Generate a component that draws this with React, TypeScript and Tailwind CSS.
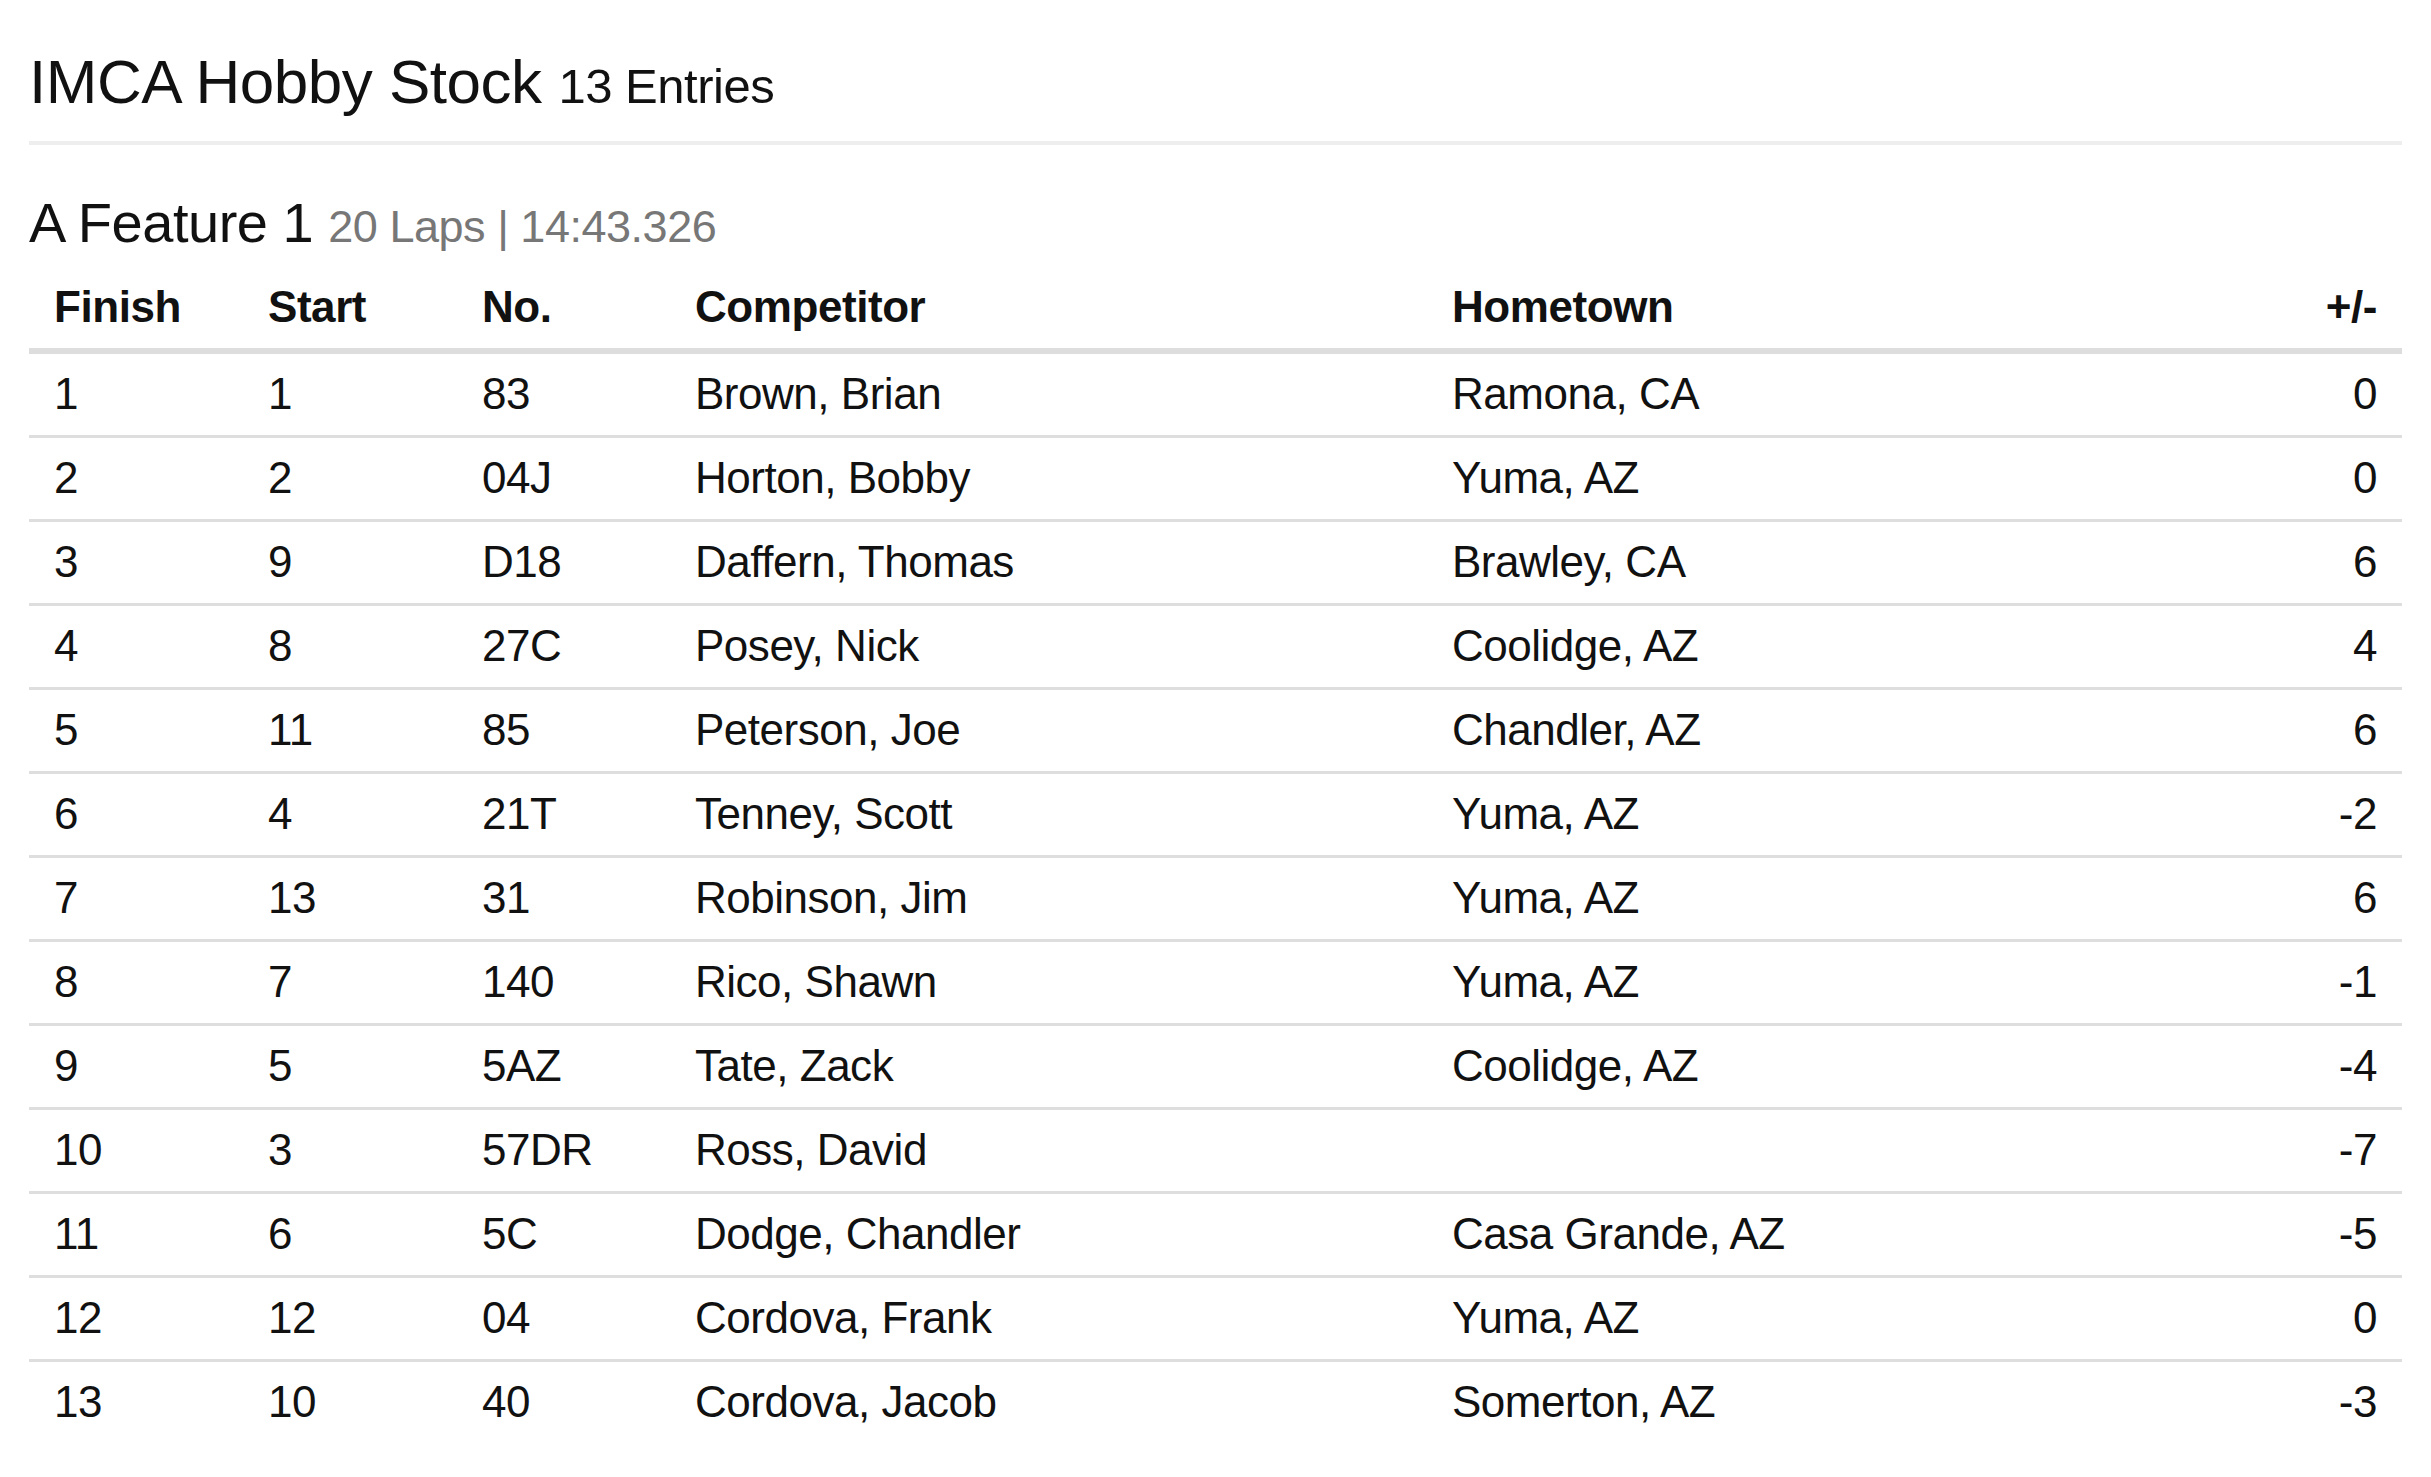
const rows = [
  { finish: 1, start: 1, no: "83", name: "Brown, Brian", town: "Ramona, CA", diff: "0" },
  { finish: 2, start: 2, no: "04J", name: "Horton, Bobby", town: "Yuma, AZ", diff: "0" },
  { finish: 3, start: 9, no: "D18", name: "Daffern, Thomas", town: "Brawley, CA", diff: "6" },
  { finish: 4, start: 8, no: "27C", name: "Posey, Nick", town: "Coolidge, AZ", diff: "4" },
  { finish: 5, start: 11, no: "85", name: "Peterson, Joe", town: "Chandler, AZ", diff: "6" },
  { finish: 6, start: 4, no: "21T", name: "Tenney, Scott", town: "Yuma, AZ", diff: "-2" },
  { finish: 7, start: 13, no: "31", name: "Robinson, Jim", town: "Yuma, AZ", diff: "6" },
  { finish: 8, start: 7, no: "140", name: "Rico, Shawn", town: "Yuma, AZ", diff: "-1" },
  { finish: 9, start: 5, no: "5AZ", name: "Tate, Zack", town: "Coolidge, AZ", diff: "-4" },
  { finish: 10, start: 3, no: "57DR", name: "Ross, David", town: "", diff: "-7" },
  { finish: 11, start: 6, no: "5C", name: "Dodge, Chandler", town: "Casa Grande, AZ", diff: "-5" },
  { finish: 12, start: 12, no: "04", name: "Cordova, Frank", town: "Yuma, AZ", diff: "0" },
  { finish: 13, start: 10, no: "40", name: "Cordova, Jacob", town: "Somerton, AZ", diff: "-3" },
];

const headers = ["Finish", "Start", "No.", "Competitor", "Hometown", "+/-"];

export default function App() {
  return (
    <div className="min-h-screen bg-white px-[29px] pt-[50px] text-[#111] font-['Liberation_Sans',Arial,sans-serif] tracking-[-0.03em]">
      <h1 className="text-[62px] leading-none font-normal pt-[1px] pb-[28px] border-b-[4px] border-[#eeeeee]">
        IMCA Hobby Stock <span className="text-[49px]">13 Entries</span>
      </h1>

      <h2 className="mt-[50px] text-[56px] leading-none font-normal">
        A Feature 1 <span className="text-[45px] text-[#777]">20 Laps | 14:43.326</span>
      </h2>

      <table className="mt-[16px] w-full table-fixed border-separate border-spacing-0 text-[44px] leading-[1.2]">
        <colgroup>
          <col className="w-[214px]" />
          <col className="w-[214px]" />
          <col className="w-[213px]" />
          <col className="w-[757px]" />
          <col className="w-[700px]" />
          <col />
        </colgroup>
        <thead>
          <tr>
            {headers.map((h, i) => (
              <th
                key={h}
                className={
                  "h-[87px] px-[25px] font-bold tracking-[-0.01em] border-b-[6px] border-[#dddddd] " +
                  (i === 5 ? "text-right" : "text-left")
                }
              >
                {h}
              </th>
            ))}
          </tr>
        </thead>
        <tbody>
          {rows.map((r, i) => {
            const last = i === rows.length - 1;
            const cell = last
              ? "h-[81px] px-[25px]"
              : "h-[84px] px-[25px] border-b-[3px] border-[#dedede]";
            return (
              <tr key={r.finish}>
                <td className={cell}>{r.finish}</td>
                <td className={cell}>{r.start}</td>
                <td className={cell}>{r.no}</td>
                <td className={cell}>{r.name}</td>
                <td className={cell}>{r.town}</td>
                <td className={cell + " text-right"}>{r.diff}</td>
              </tr>
            );
          })}
        </tbody>
      </table>
    </div>
  );
}
